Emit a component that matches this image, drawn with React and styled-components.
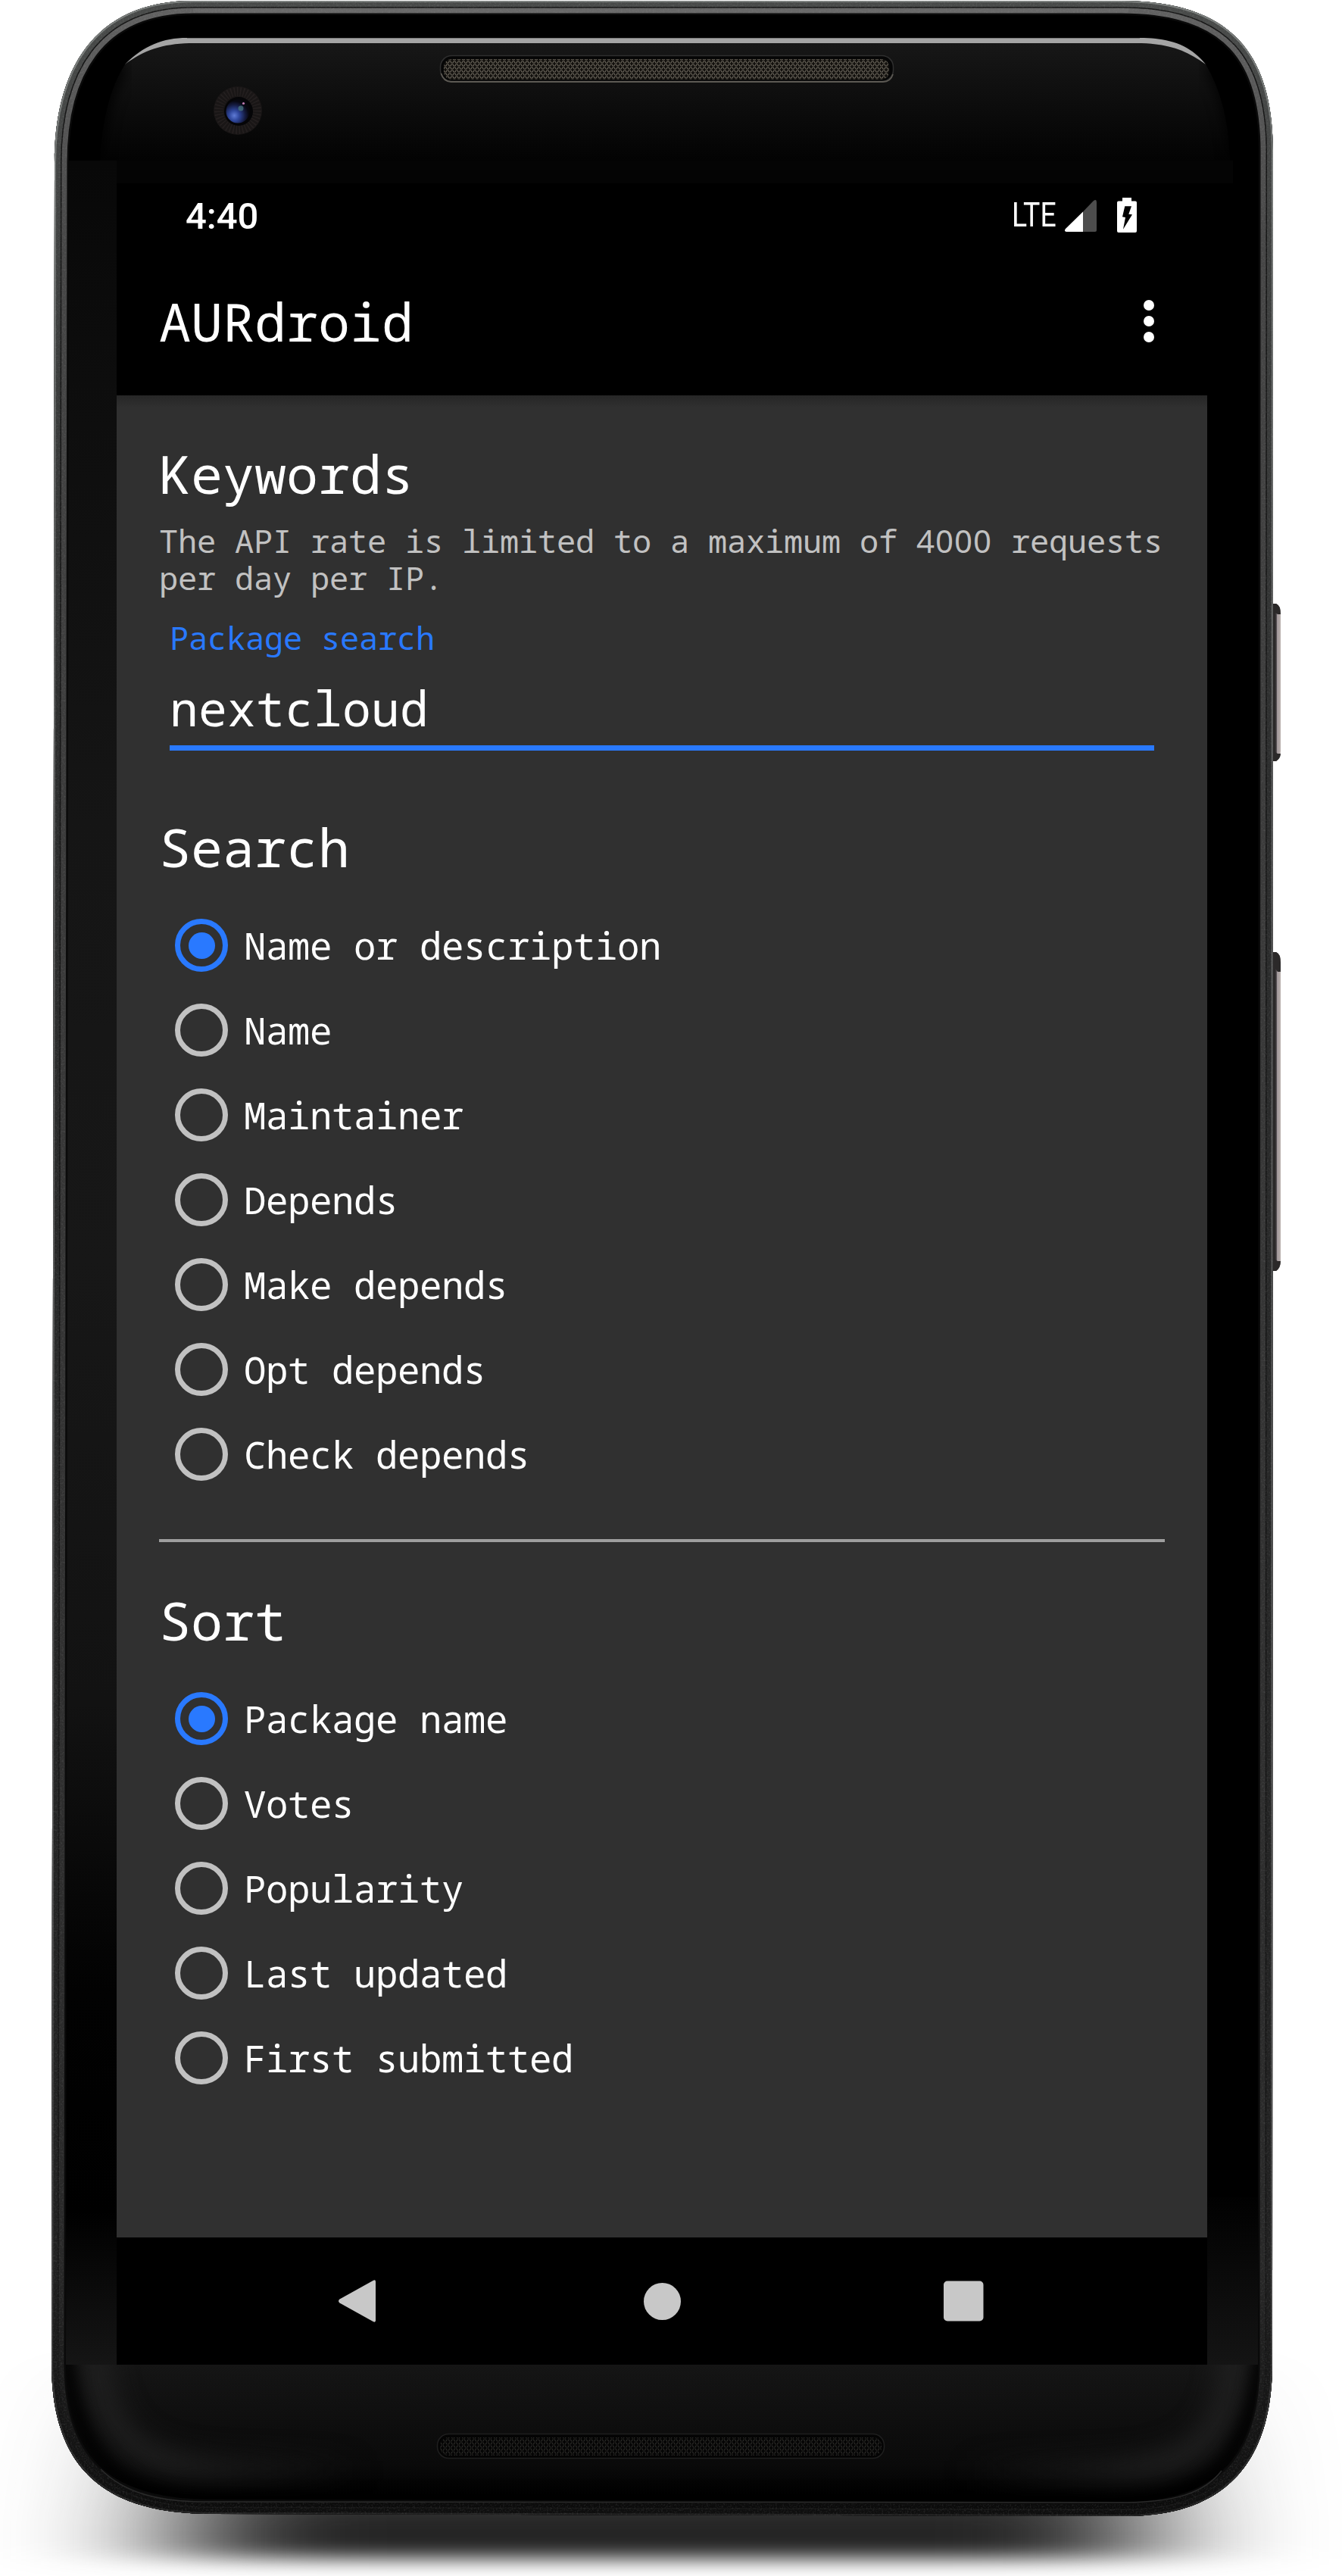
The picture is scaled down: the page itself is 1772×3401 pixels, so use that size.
import React, { useState } from 'react';
import styled, { createGlobalStyle } from 'styled-components';

const MONO = '"Noto Sans Mono", "DejaVu Sans Mono", monospace';
const BLUE = '#2979ff';

const GlobalStyle = createGlobalStyle`
  * { box-sizing: border-box; }
  body { margin: 0; background: #fff; }
`;

const Stage = styled.div`
  position: relative;
  width: 1772px;
  height: 3401px;
  overflow: hidden;
  padding: 242px 178px 0 154px;
  background: #fff;
`;

const DeviceArt = styled.svg`
  position: absolute;
  inset: 0;
  display: block;
`;

const Screen = styled.main`
  position: relative;
  display: flex;
  flex-direction: column;
  width: 1440px;
  height: 2880px;
  background: #303030;
  color: #fff;
  font-family: ${MONO};
`;

const StatusBar = styled.div`
  display: flex;
  align-items: center;
  justify-content: space-between;
  height: 84px;
  padding: 0 93px 0 91px;
  background: #000;
  font-family: Roboto, sans-serif;
`;

const Clock = styled.span`
  font-size: 49px;
  font-weight: 500;
  line-height: 84px;
  padding-top: 3px;
`;

const StatusIcons = styled.div`
  display: flex;
  align-items: center;
`;

const Network = styled.span`
  width: 70px;
  font-size: 44px;
  line-height: 84px;
  transform: scaleX(0.85);
  transform-origin: left;
`;

const Signal = styled.svg`
  display: block;
  width: 42px;
  height: 42px;
  margin: 2px 27px 0 0;
`;

const Battery = styled.svg`
  display: block;
  width: 26px;
  height: 46px;
`;

const AppBar = styled.header`
  display: flex;
  align-items: center;
  justify-content: space-between;
  height: 196px;
  padding: 0 70px 0 56px;
  background: #000;
`;

const AppTitle = styled.h1`
  margin: 0;
  font-size: 70px;
  font-weight: 400;
  line-height: 82px;
`;

const Overflow = styled.div`
  display: flex;
  flex-direction: column;
  gap: 7px;
`;

const Dot = styled.span`
  width: 14px;
  height: 14px;
  border-radius: 50%;
  background: #fff;
`;

const Content = styled.div`
  flex: 1;
  padding: 62px 56px 0;
  background: linear-gradient(#262626, #303030 16px);
`;

const Heading = styled.h2`
  margin: 0;
  font-size: 70px;
  font-weight: 400;
  line-height: 82px;
`;

const Hint = styled.p`
  margin: 23px -20px 0 0;
  color: #c1c1c1;
  font-size: 42px;
  line-height: 49px;
  letter-spacing: -0.2px;
`;

const HintLine = styled.span`
  display: block;
  height: 49px;
  white-space: pre;
`;

const Figures = styled.span`
  font-family: "Noto Sans", sans-serif;
  letter-spacing: 0.98px;
`;

const Field = styled.div`
  margin: 30px 14px 86px;
  border-bottom: 7px solid ${BLUE};
`;

const FieldLabel = styled.div`
  color: ${BLUE};
  font-size: 42px;
  line-height: 49px;
  letter-spacing: -0.2px;
`;

const FieldValue = styled.div`
  margin-top: 32px;
  padding-bottom: 12px;
  font-size: 63px;
  line-height: 74px;
  letter-spacing: 0.2px;
`;

const Options = styled.div`
  display: flex;
  flex-direction: column;
  padding-top: 33px;
`;

const Option = styled.label`
  display: flex;
  align-items: center;
  gap: 21px;
  height: 112px;
  padding-left: 21px;
  font-size: 49px;
  line-height: 56px;
  letter-spacing: -0.4px;
`;

const Radio = styled.input`
  appearance: none;
  display: grid;
  place-items: center;
  width: 70px;
  height: 70px;
  margin: 0;
  border: 7px solid #c1c1c1;
  border-radius: 50%;

  &:checked {
    border-color: ${BLUE};
  }

  &:checked::before {
    content: '';
    width: 35px;
    height: 35px;
    border-radius: 50%;
    background: ${BLUE};
  }
`;

const Divider = styled.hr`
  height: 4px;
  margin: 56px 0 62px;
  border: 0;
  background: #9e9e9e;
`;

const NavBar = styled.nav`
  display: flex;
  justify-content: center;
  height: 168px;
  background: #000;
`;

const NavButton = styled.div`
  display: flex;
  align-items: center;
  justify-content: center;
  width: 400px;
`;

const NavIcon = styled.svg`
  display: block;
  width: 60px;
  height: 60px;
  fill: #c8c8c8;
`;

const BODY =
  'M72 215C72 95 122 1 255 1L1480 1C1630 1 1681 75 1681 200L1680 3120C1680 3260 1610 3322 1485 3322L280 3319C150 3319 68 3270 68 3120Z';

function Device() {
  return (
    <DeviceArt width="1772" height="3401" viewBox="0 0 1772 3401" aria-hidden="true">
      <defs>
        <clipPath id="body"><path d={BODY} /></clipPath>
        <clipPath id="chinClip"><rect x="60" y="3122" width="1630" height="200" /></clipPath>
        <linearGradient id="ground" gradientUnits="userSpaceOnUse" x1="0" y1="3100" x2="0" y2="3330">
          <stop offset="0" stopColor="#242424" stopOpacity="0" />
          <stop offset="0.6" stopColor="#242424" stopOpacity="0.65" />
          <stop offset="1" stopColor="#242424" />
        </linearGradient>
        <linearGradient id="rimGrain" gradientUnits="userSpaceOnUse" x1="0" y1="0" x2="0" y2="3322">
          <stop offset="0" stopColor="#626262" />
          <stop offset="0.1" stopColor="#464646" />
          <stop offset="0.3" stopColor="#3c3c3c" />
          <stop offset="0.9" stopColor="#282828" />
          <stop offset="0.98" stopColor="#121212" />
          <stop offset="1" stopColor="#0a0a0a" />
        </linearGradient>
        <linearGradient id="rimOuter" gradientUnits="userSpaceOnUse" x1="0" y1="0" x2="0" y2="3322">
          <stop offset="0" stopColor="#484a49" />
          <stop offset="0.3" stopColor="#2c2d2d" />
          <stop offset="0.9" stopColor="#202020" />
          <stop offset="1" stopColor="#0e0e0e" />
        </linearGradient>
        <linearGradient id="rimEdge" gradientUnits="userSpaceOnUse" x1="0" y1="0" x2="0" y2="3322">
          <stop offset="0" stopColor="#7c807e" />
          <stop offset="0.3" stopColor="#5e5f5f" />
          <stop offset="0.9" stopColor="#484848" />
          <stop offset="1" stopColor="#222" />
        </linearGradient>
        <linearGradient id="leftGlass" gradientUnits="userSpaceOnUse" x1="0" y1="212" x2="0" y2="3122">
          <stop offset="0" stopColor="#080808" />
          <stop offset="0.12" stopColor="#0e0e0e" />
          <stop offset="0.3" stopColor="#151515" />
          <stop offset="0.5" stopColor="#171717" />
          <stop offset="0.7" stopColor="#121212" />
          <stop offset="0.83" stopColor="#020202" />
          <stop offset="0.93" stopColor="#000" />
          <stop offset="1" stopColor="#151515" />
        </linearGradient>
        <linearGradient id="rightGlass" gradientUnits="userSpaceOnUse" x1="0" y1="2900" x2="0" y2="3122">
          <stop offset="0" stopColor="#010101" />
          <stop offset="1" stopColor="#141414" />
        </linearGradient>
        <linearGradient id="topGlass" gradientUnits="userSpaceOnUse" x1="0" y1="57" x2="0" y2="212">
          <stop offset="0" stopColor="#171717" />
          <stop offset="1" stopColor="#030303" />
        </linearGradient>
        <linearGradient id="chin" gradientUnits="userSpaceOnUse" x1="0" y1="3122" x2="0" y2="3298">
          <stop offset="0" stopColor="#151515" />
          <stop offset="0.5" stopColor="#0d0d0d" />
          <stop offset="0.75" stopColor="#0a0a0a" />
          <stop offset="1" stopColor="#000" />
        </linearGradient>
        <linearGradient id="sheen" gradientUnits="userSpaceOnUse" x1="120" y1="0" x2="1632" y2="0">
          <stop offset="0" stopColor="#222" />
          <stop offset="0.07" stopColor="#222" />
          <stop offset="0.24" stopColor="#222" stopOpacity="0" />
          <stop offset="0.76" stopColor="#222" stopOpacity="0" />
          <stop offset="0.93" stopColor="#222" />
          <stop offset="1" stopColor="#222" />
        </linearGradient>
        <radialGradient id="lens" cx="0.35" cy="0.68" r="0.62">
          <stop offset="0" stopColor="#5f7bd6" />
          <stop offset="0.35" stopColor="#2f479c" />
          <stop offset="0.75" stopColor="#141a3e" />
          <stop offset="1" stopColor="#07070f" />
        </radialGradient>
        <linearGradient id="button" x1="0" y1="0" x2="1" y2="0">
          <stop offset="0" stopColor="#262626" />
          <stop offset="0.56" stopColor="#3d393b" />
          <stop offset="0.64" stopColor="#a0979a" />
          <stop offset="1" stopColor="#b9b0ad" />
        </linearGradient>
        <pattern id="mesh" width="6" height="8" patternUnits="userSpaceOnUse">
          <rect width="6" height="8" fill="#12100d" />
          <path d="M0.5 0.5L2.5 3.5M3.5 3.5L5.5 0.5M2.5 4.5L0.5 7.5M5.5 7.5L3.5 4.5" stroke="#69645a" strokeWidth="1.3" />
        </pattern>
        <pattern id="meshDark" width="7" height="8" patternUnits="userSpaceOnUse">
          <rect width="7" height="8" fill="#050505" />
          <path d="M0.5 0.5L2.5 3.5M4 3.5L6 0.5M2.5 4.5L0.5 7.5M6 7.5L4 4.5" stroke="#2f2e2b" strokeWidth="1.1" />
        </pattern>
        <filter id="shadowBlur" x="-50%" y="-50%" width="200%" height="200%" colorInterpolationFilters="sRGB">
          <feGaussianBlur stdDeviation="112 13" />
        </filter>
        <filter id="soft" x="-40%" y="-20%" width="180%" height="140%" colorInterpolationFilters="sRGB">
          <feGaussianBlur stdDeviation="9" />
        </filter>
        <filter id="glow" x="-20%" y="-50%" width="140%" height="200%" colorInterpolationFilters="sRGB">
          <feGaussianBlur stdDeviation="17" />
        </filter>
        <filter id="grain" filterUnits="userSpaceOnUse" x="60" y="0" width="1630" height="3330">
          <feTurbulence type="fractalNoise" baseFrequency="0.45" numOctaves="2" seed="4" />
          <feColorMatrix type="matrix" values="0 0 0 0 0.8  0 0 0 0 0.8  0 0 0 0 0.8  1.6 0 0 0 -0.72" />
          <feComposite in2="SourceGraphic" operator="in" />
        </filter>
      </defs>

      <rect x="238" y="3110" width="1270" height="268" fill="url(#ground)" filter="url(#shadowBlur)" />

      <path d="M1678 797h7q6 2 6 14v180q0 10-6 14h-7z" fill="url(#button)" />
      <path d="M1678 797h7q6 2 6 14h-4l-3-2v184l3 2h4q0 6-6 10h-7z" fill="#2b2929" />
      <path d="M1678 1257h7q6 2 6 14v394q0 9-6 13h-7z" fill="url(#button)" />
      <path d="M1678 1257h7q6 2 6 14v12h-4l-3-4v384l3 2h4q0 9-6 13h-7z" fill="#2b2929" />

      <g clipPath="url(#body)">
        <path d={BODY} fill="#000" />
        <path d="M165 85C190 62 215 57 250 57L1500 57C1540 57 1565 65 1592 85Q1622 135 1624 212L132 212Q136 130 165 85Z" fill="url(#topGlass)" />
        <path d="M160 85Q130 130 126 212" fill="none" stroke="#000" strokeWidth="18" filter="url(#soft)" />
        <path d="M1597 85Q1626 130 1632 212" fill="none" stroke="#000" strokeWidth="14" filter="url(#soft)" />
        <rect x="88" y="212" width="1540" height="30" fill="#040404" />
        <rect x="80" y="212" width="74" height="2912" fill="url(#leftGlass)" />
        <rect x="1594" y="2900" width="70" height="222" fill="url(#rightGlass)" />
        <path d="M68 3122H1680V3330H68Z" fill="url(#chin)" />
        <g clipPath="url(#chinClip)">
          <path d="M124 3060C126 3215 170 3255 300 3260L500 3262M1632 3060C1630 3220 1590 3258 1450 3262L1250 3262" fill="none" stroke="url(#sheen)" strokeWidth="30" filter="url(#glow)" />
          <path d="M84 3060C86 3255 165 3303 280 3303L1485 3304C1600 3304 1666 3240 1668 3060" fill="none" stroke="#000" strokeWidth="18" filter="url(#soft)" />
        </g>

        <path d={BODY} fill="none" stroke="#0a0a0a" strokeWidth="38" />
        <path d={BODY} fill="none" stroke="url(#rimGrain)" strokeWidth="33" />
        <path d={BODY} fill="none" stroke="#161616" strokeWidth="19" />
        <path d={BODY} fill="none" stroke="url(#rimOuter)" strokeWidth="16" />
        <path d={BODY} fill="none" stroke="url(#rimEdge)" strokeWidth="4" />
        <path d={BODY} fill="none" stroke="#fff" strokeWidth="32" filter="url(#grain)" opacity="0.15" />
        <path d="M255 14H1490" stroke="#777" strokeWidth="5" opacity="0.4" />
        <path d="M133 3260C165 3292 210 3303 270 3303L1490 3304C1550 3303 1590 3292 1613 3262" fill="none" stroke="#2a2a2a" strokeWidth="1.5" />
      </g>

      <path d="M165 85C190 60 215 50 247 50L1505 50C1545 50 1572 60 1592 85C1565 65 1540 57 1500 57L250 57C215 58 190 66 165 85Z" fill="#a5a5a5" />
      <path d="M247 50.5H1505" stroke="#777" strokeWidth="1" />

      <circle cx="314" cy="146" r="32" fill="#191616" />
      <circle cx="314" cy="146" r="25" fill="none" stroke="#2b2727" strokeWidth="12" strokeDasharray="1.5 2.5" opacity="0.6" />
      <circle cx="315" cy="147" r="19" fill="#050507" />
      <circle cx="314" cy="147" r="15.5" fill="url(#lens)" />
      <circle cx="318" cy="143" r="3.5" fill="#4c7a80" opacity="0.7" />
      <circle cx="321.500" cy="136.500" r="1.6" fill="#c07bb0" />

      <rect x="581.500" y="73.500" width="598" height="34" rx="15" fill="#060606" stroke="#2f2f2f" strokeWidth="1.5" />
      <path d="M582.500 97q3 10.500 13 11H1166q10 0 13-10" fill="none" stroke="#5c5953" strokeWidth="1.8" />
      <rect x="586" y="78" width="588" height="27" rx="10" fill="url(#mesh)" />

      <rect x="577.500" y="3213.500" width="590" height="32" rx="15" fill="#040404" stroke="#1f1f1f" strokeWidth="1.5" />
      <rect x="581" y="3218" width="583" height="24" rx="11" fill="url(#meshDark)" />
    </DeviceArt>
  );
}

function RadioGroup({ name, items }) {
  const [value, setValue] = useState(items[0]);
  return (
    <Options role="radiogroup">
      {items.map((item) => (
        <Option key={item}>
          <Radio type="radio" name={name} checked={value === item} onChange={() => setValue(item)} />
          {item}
        </Option>
      ))}
    </Options>
  );
}

const SEARCH_BY = ['Name or description', 'Name', 'Maintainer', 'Depends', 'Make depends', 'Opt depends', 'Check depends'];
const SORT_BY = ['Package name', 'Votes', 'Popularity', 'Last updated', 'First submitted'];

export default function App() {
  return (
    <Stage>
      <GlobalStyle />
      <Device />
      <Screen>
        <StatusBar>
          <Clock>4:40</Clock>
          <StatusIcons>
            <Network>LTE</Network>
            <Signal viewBox="0 0 42 42">
              <path d="M24 15.500L37.500 1.500Q42-2 42 3V40Q42 42 40 42H24Z" fill="#4d4d4d" />
              <path d="M24 15.500V42H2Q-1.500 41.500 1 38Z" fill="#fff" />
            </Signal>
            <Battery viewBox="0 0 26 46">
              <path d="M7 0H19V4.500H24Q26 4.500 26 6.500V44Q26 46 24 46H2Q0 46 0 44V6.500Q0 4.500 2 4.500H7Z" fill="#fff" />
              <path d="M10.300 11.300H19L15.300 21.700L20 22.300L8 41.700L11 26L7 25.300Z" fill="#000" />
            </Battery>
          </StatusIcons>
        </StatusBar>
        <AppBar>
          <AppTitle>AURdroid</AppTitle>
          <Overflow>
            <Dot />
            <Dot />
            <Dot />
          </Overflow>
        </AppBar>
        <Content>
          <Heading>Keywords</Heading>
          <Hint>
            <HintLine>
              {'The API rate is limited to a maximum of '}
              <Figures>4000</Figures>
              {' requests'}
            </HintLine>
            <HintLine>per day per IP.</HintLine>
          </Hint>
          <Field>
            <FieldLabel>Package search</FieldLabel>
            <FieldValue>nextcloud</FieldValue>
          </Field>
          <Heading>Search</Heading>
          <RadioGroup name="search" items={SEARCH_BY} />
          <Divider />
          <Heading>Sort</Heading>
          <RadioGroup name="sort" items={SORT_BY} />
        </Content>
        <NavBar>
          <NavButton>
            <NavIcon viewBox="0 0 60 60">
              <path d="M4.500 27.500L49 2.700Q52 1.500 52 4.500V55.500Q52 58.500 49 57.300L4.500 32.500Q1.500 30 4.500 27.500Z" />
            </NavIcon>
          </NavButton>
          <NavButton>
            <NavIcon viewBox="0 0 60 60">
              <circle cx="30.500" cy="30.500" r="24.500" />
            </NavIcon>
          </NavButton>
          <NavButton>
            <NavIcon viewBox="0 0 60 60">
              <rect x="2" y="3.500" width="52.500" height="53" rx="5" />
            </NavIcon>
          </NavButton>
        </NavBar>
      </Screen>
    </Stage>
  );
}
